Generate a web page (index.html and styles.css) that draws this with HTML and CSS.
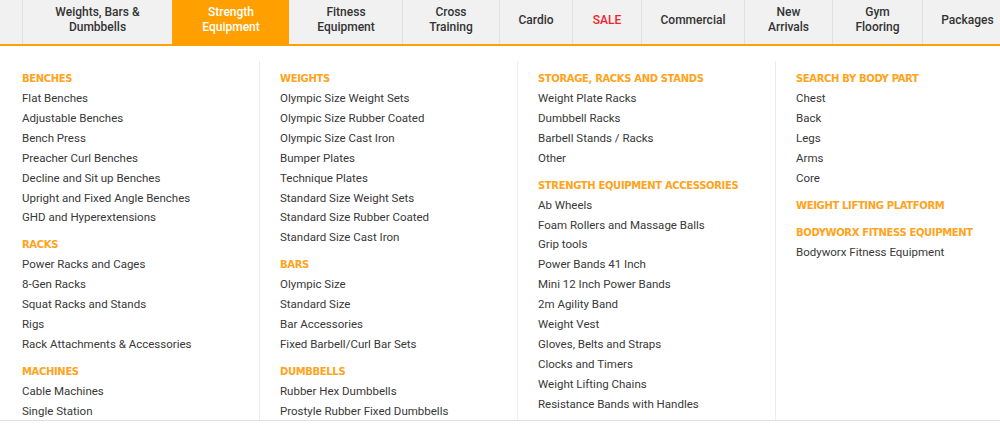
FILE: index.html
```html
<!DOCTYPE html>
<html>
<head>
<meta charset="utf-8">
<link rel="stylesheet" href="styles.css">
</head>
<body>
<nav class="nav">
  <div class="nav-item blank"></div>
  <div class="nav-item">Weights, Bars &amp;<br>Dumbbells</div>
  <div class="nav-item active">Strength<br>Equipment</div>
  <div class="nav-item">Fitness<br>Equipment</div>
  <div class="nav-item">Cross<br>Training</div>
  <div class="nav-item">Cardio</div>
  <div class="nav-item sale">SALE</div>
  <div class="nav-item">Commercial</div>
  <div class="nav-item">New<br>Arrivals</div>
  <div class="nav-item">Gym<br>Flooring</div>
  <div class="nav-item">Packages</div>
</nav>
<div class="dropdown">
  <div class="col first">
    <div class="group">
      <div class="heading">BENCHES</div>
      <a class="link">Flat Benches</a>
      <a class="link">Adjustable Benches</a>
      <a class="link">Bench Press</a>
      <a class="link">Preacher Curl Benches</a>
      <a class="link">Decline and Sit up Benches</a>
      <a class="link">Upright and Fixed Angle Benches</a>
      <a class="link">GHD and Hyperextensions</a>
    </div>
    <div class="group">
      <div class="heading">RACKS</div>
      <a class="link">Power Racks and Cages</a>
      <a class="link">8-Gen Racks</a>
      <a class="link">Squat Racks and Stands</a>
      <a class="link">Rigs</a>
      <a class="link">Rack Attachments &amp; Accessories</a>
    </div>
    <div class="group">
      <div class="heading">MACHINES</div>
      <a class="link">Cable Machines</a>
      <a class="link">Single Station</a>
    </div>
  </div>
  <div class="col">
    <div class="group">
      <div class="heading">WEIGHTS</div>
      <a class="link">Olympic Size Weight Sets</a>
      <a class="link">Olympic Size Rubber Coated</a>
      <a class="link">Olympic Size Cast Iron</a>
      <a class="link">Bumper Plates</a>
      <a class="link">Technique Plates</a>
      <a class="link">Standard Size Weight Sets</a>
      <a class="link">Standard Size Rubber Coated</a>
      <a class="link">Standard Size Cast Iron</a>
    </div>
    <div class="group">
      <div class="heading">BARS</div>
      <a class="link">Olympic Size</a>
      <a class="link">Standard Size</a>
      <a class="link">Bar Accessories</a>
      <a class="link">Fixed Barbell/Curl Bar Sets</a>
    </div>
    <div class="group">
      <div class="heading">DUMBBELLS</div>
      <a class="link">Rubber Hex Dumbbells</a>
      <a class="link">Prostyle Rubber Fixed Dumbbells</a>
    </div>
  </div>
  <div class="col">
    <div class="group">
      <div class="heading">STORAGE, RACKS AND STANDS</div>
      <a class="link">Weight Plate Racks</a>
      <a class="link">Dumbbell Racks</a>
      <a class="link">Barbell Stands / Racks</a>
      <a class="link">Other</a>
    </div>
    <div class="group">
      <div class="heading">STRENGTH EQUIPMENT ACCESSORIES</div>
      <a class="link">Ab Wheels</a>
      <a class="link">Foam Rollers and Massage Balls</a>
      <a class="link">Grip tools</a>
      <a class="link">Power Bands 41 Inch</a>
      <a class="link">Mini 12 Inch Power Bands</a>
      <a class="link">2m Agility Band</a>
      <a class="link">Weight Vest</a>
      <a class="link">Gloves, Belts and Straps</a>
      <a class="link">Clocks and Timers</a>
      <a class="link">Weight Lifting Chains</a>
      <a class="link">Resistance Bands with Handles</a>
      <a class="link">Other</a>
    </div>
  </div>
  <div class="col">
    <div class="group">
      <div class="heading">SEARCH BY BODY PART</div>
      <a class="link">Chest</a>
      <a class="link">Back</a>
      <a class="link">Legs</a>
      <a class="link">Arms</a>
      <a class="link">Core</a>
    </div>
    <div class="group">
      <div class="heading">WEIGHT LIFTING PLATFORM</div>
    </div>
    <div class="group">
      <div class="heading">BODYWORX FITNESS EQUIPMENT</div>
      <a class="link">Bodyworx Fitness Equipment</a>
    </div>
  </div>
</div>
</body>
</html>
```
FILE: styles.css
```css
* { box-sizing: border-box; }
html, body { margin: 0; padding: 0; background: #fff; }
body { font-family: Roboto, "Liberation Sans", sans-serif; width: 1000px; overflow: hidden; }

.nav {
  display: grid;
  grid-template-columns: 22px 150px 117px 113px 97px 73px 69px 103px 88px 90px 90px;
  width: 1012px;
  height: 46px;
  background: #f1f1f1;
  border-bottom: 2px solid #ffa000;
}
.nav-item {
  display: flex;
  align-items: center;
  justify-content: center;
  text-align: center;
  padding-bottom: 4px;
  border-left: 1px solid #e1e1e1;
  font-size: 12px;
  font-weight: 500;
  line-height: 15px;
  color: #333;
}
.nav-item.blank { border-left: none; }
.nav-item.active { background: #ffa000; color: #fff; border-left-color: #ffa000; }
.nav-item.active + .nav-item { border-left-color: #f1f1f1; }
.nav-item.sale { color: #f2232b; }

.dropdown {
  display: grid;
  grid-template-columns: 259px 258px 258px 1fr;
  height: 375px;
  padding-top: 15px;
  overflow: hidden;
  border-bottom: 1px solid #d9e1ea;
}
.col {
  border-left: 1px solid #ececec;
  padding: 8px 0 0 20px;
}
.col.first { border-left: none; padding-left: 22px; }
.group { display: flex; flex-direction: column; }
.heading {
  font-family: "DejaVu Sans", sans-serif;
  font-weight: bold;
  font-size: 10px;
  letter-spacing: -0.35px;
  line-height: 20px;
  color: #ffa31a;
  margin-top: 7px;
}
.group:first-child .heading { margin-top: 0; }
.link {
  font-size: 11.5px;
  line-height: 19.9px;
  color: #383838;
  text-decoration: none;
}
```
